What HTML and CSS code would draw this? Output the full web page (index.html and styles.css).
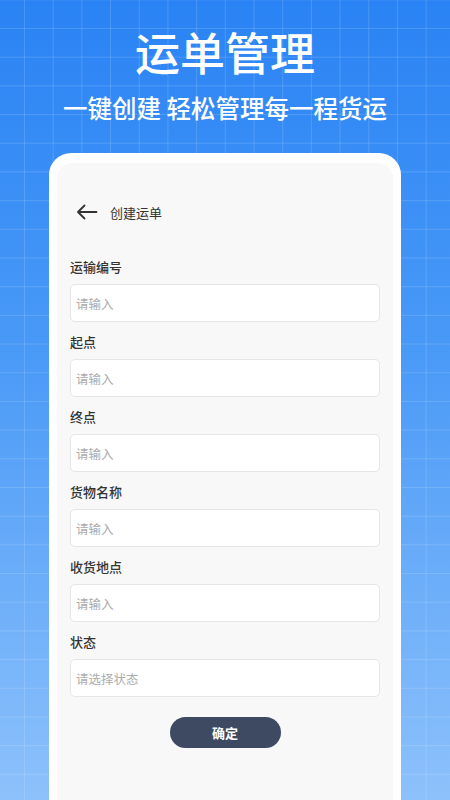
FILE: index.html
```html
<!DOCTYPE html>
<html lang="zh-CN">
<head>
<meta charset="utf-8">
<title>运单管理</title>
<link rel="stylesheet" href="styles.css">
</head>
<body>
<div class="page">
  <header class="hero">
    <h1 class="hero-title">运单管理</h1>
    <p class="hero-sub">一键创建 轻松管理每一程货运</p>
  </header>
  <section class="device">
    <div class="screen">
      <div class="topbar">
        <svg class="back" viewBox="0 0 22 16" width="22" height="16" aria-hidden="true">
          <path d="M20.5 8H2.2M8.5 1.5L2 8l6.5 6.5" fill="none" stroke="#333" stroke-width="1.8" stroke-linecap="round" stroke-linejoin="round"/>
        </svg>
        <span class="topbar-title">创建运单</span>
      </div>
      <form class="form">
        <div class="field">
          <div class="label">运输编号</div>
          <div class="input">请输入</div>
        </div>
        <div class="field">
          <div class="label">起点</div>
          <div class="input">请输入</div>
        </div>
        <div class="field">
          <div class="label">终点</div>
          <div class="input">请输入</div>
        </div>
        <div class="field">
          <div class="label">货物名称</div>
          <div class="input">请输入</div>
        </div>
        <div class="field">
          <div class="label">收货地点</div>
          <div class="input">请输入</div>
        </div>
        <div class="field">
          <div class="label">状态</div>
          <div class="input">请选择状态</div>
        </div>
        <div class="actions">
          <div class="btn">确定</div>
        </div>
      </form>
    </div>
  </section>
</div>
</body>
</html>
```
FILE: styles.css
```css
* { box-sizing: border-box; }
html, body { margin: 0; padding: 0; }
body {
  font-family: "Noto Sans CJK SC", "Noto Sans", sans-serif;
}
.page {
  width: 450px;
  height: 800px;
  overflow: hidden;
  display: flex;
  flex-direction: column;
  background-color: #3b8ef6;
  background-image:
    linear-gradient(rgba(255,255,255,0.14) 1px, transparent 1px),
    linear-gradient(90deg, rgba(255,255,255,0.14) 1px, transparent 1px),
    linear-gradient(180deg, #2a83f4 0%, #4a9af7 45%, #8dc1fb 100%);
  background-size: 28.7px 28.7px, 28.7px 28.7px, 100% 100%;
  background-position: 0 28px, 24px 0, 0 0;
}
.hero {
  padding-top: 24px;
  text-align: center;
  color: #fff;
}
.hero-title {
  margin: 0;
  font-size: 45px;
  line-height: 56px;
  font-weight: 500;
  letter-spacing: 0;
}
.hero-sub {
  margin: 12px 0 0;
  font-size: 24.5px;
  line-height: 32px;
  font-weight: 500;
}
.device {
  margin: 29px 49px 0;
  flex: 1;
  background: #fefefe;
  border-radius: 22px 22px 0 0;
  padding: 10px 8px 0;
}
.screen {
  height: 100%;
  background: #f8f8f8;
  border-radius: 16px 16px 0 0;
  padding: 27px 13px 0;
}
.topbar {
  height: 44px;
  display: flex;
  align-items: center;
}
.back {
  margin-left: 6px;
  width: 22px;
  height: 16px;
}
.topbar-title {
  margin-left: 12px;
  font-size: 13px;
  color: #333;
}
.form {
  margin: 23px 0 0;
}
.field {
  margin-bottom: 10px;
}
.label {
  height: 20px;
  line-height: 20px;
  font-size: 13px;
  font-weight: 500;
  color: #333;
  margin-bottom: 7px;
}
.input {
  height: 38px;
  background: #fff;
  border: 1px solid #e6e6e6;
  border-radius: 5px;
  padding-left: 5px;
  display: flex;
  align-items: center;
  font-size: 12.5px;
  color: #acacac;
}
.actions {
  display: flex;
  justify-content: center;
  padding-top: 10px;
}
.btn {
  width: 111px;
  height: 31px;
  border-radius: 16px;
  background: #3d4a62;
  color: #fff;
  font-size: 13px;
  font-weight: 700;
  display: flex;
  align-items: center;
  justify-content: center;
}
```
